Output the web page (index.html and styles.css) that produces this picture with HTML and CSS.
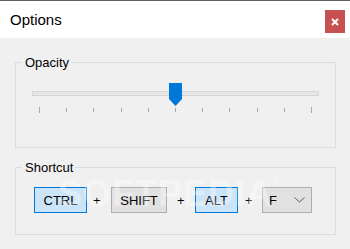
FILE: index.html
```html
<!DOCTYPE html>
<html>
<head>
<meta charset="utf-8">
<link rel="stylesheet" href="styles.css">
</head>
<body>
<div class="window">
  <header class="titlebar">
    <span class="title">Options</span>
    <button class="close" aria-label="Close">
      <svg width="8" height="8" viewBox="0 0 8 8"><path d="M1 1 L7 7 M7 1 L1 7" stroke="#fff" stroke-width="2" fill="none"/></svg>
    </button>
  </header>
  <main class="content">
    <fieldset class="group">
      <legend>Opacity</legend>
      <div class="slider">
        <div class="track-area">
          <div class="track"></div>
          <svg class="thumb" width="13" height="24" viewBox="0 0 13 24"><path d="M0 0 H13 V16 L6.5 23 L0 16 Z" fill="#0078d7"/></svg>
        </div>
        <div class="ticks">
          <span class="tick end"></span><span class="tick"></span><span class="tick"></span><span class="tick"></span><span class="tick"></span><span class="tick"></span><span class="tick"></span><span class="tick"></span><span class="tick"></span><span class="tick"></span><span class="tick end"></span>
        </div>
      </div>
    </fieldset>
    <fieldset class="group shortcut">
      <legend>Shortcut</legend>
      <div class="keys">
        <span class="key on k-ctrl">CTRL</span>
        <span class="plus p1">+</span>
        <span class="key k-shift">SHIFT</span>
        <span class="plus p2">+</span>
        <span class="key on k-alt">ALT</span>
        <span class="plus p3">+</span>
        <span class="key select">
          <span>F</span>
          <svg width="11" height="6" viewBox="0 0 11 6"><path d="M0.5 0.5 L5.5 5 L10.5 0.5" stroke="#606060" stroke-width="1" fill="none"/></svg>
        </span>
      </div>
    </fieldset>
  </main>
  <div class="watermark">SOFTPEDIA<span class="reg">®</span></div>
</div>
</body>
</html>
```
FILE: styles.css
```css
html, body {
  margin: 0;
  padding: 0;
}
body {
  background: #f0f0f0;
  font-family: "Liberation Sans", Arial, sans-serif;
  font-size: 13px;
  color: #000;
}
.window {
  position: relative;
  width: 350px;
  height: 249px;
  overflow: hidden;
  border-top: 1px solid #5f5f5f;
  box-sizing: border-box;
}
.titlebar {
  height: 37px;
  background: #fff;
  display: flex;
  justify-content: space-between;
  align-items: flex-start;
  padding-left: 10px;
}
.title {
  margin-top: 10px;
  font-size: 15px;
  line-height: 18px;
  color: #000;
}
.close {
  margin: 9px 5px 0 0;
  width: 20px;
  height: 23px;
  padding: 0;
  border: none;
  background: #c75050;
  display: flex;
  align-items: center;
  justify-content: center;
}
.content {
  padding: 17px 14px 0 15px;
}
.group {
  margin: 0;
  padding: 0;
  min-width: 0;
  border: 1px solid #dcdcdc;
}
.group legend {
  margin-left: 6px;
  padding: 0 2px 0 3px;
  font-size: 13px;
  line-height: 15px;
}
.slider {
  margin: 13px 16px 34px 16px;
}
.track-area {
  position: relative;
  height: 24px;
}
.track {
  position: relative;
  top: 8px;
  height: 5px;
  box-sizing: border-box;
  border: 1px solid #d6d6d6;
  background: #e6e6e6;
}
.thumb {
  position: absolute;
  top: 0;
  left: 137px;
}
.ticks {
  display: flex;
  justify-content: space-between;
  align-items: flex-start;
  height: 6px;
  padding: 0 7px;
}
.tick {
  width: 1px;
  height: 4px;
  margin-top: 1px;
  background: #a8a8a8;
}
.tick.end {
  height: 6px;
  margin-top: 0;
}
.shortcut {
  margin-top: 12px;
}
.keys {
  display: flex;
  align-items: center;
  margin: 12px 0 21px 18px;
  height: 26px;
}
.key {
  height: 26px;
  box-sizing: border-box;
  display: flex;
  align-items: center;
  justify-content: center;
  border: 1px solid #adadad;
  background: #e1e1e1;
  font-size: 13px;
}
.key.on {
  border-color: #0078d7;
  background: #cce4f7;
}
.k-ctrl { width: 53px; }
.k-shift { width: 56px; }
.k-alt { width: 43px; }
.select {
  width: 50px;
  justify-content: space-between;
  padding: 0 6px 0 6px;
}
.plus {
  box-sizing: border-box;
  font-size: 13px;
}
.p1 { width: 24px; padding-left: 6px; }
.p2 { width: 28px; padding-left: 10px; }
.p3 { width: 24px; padding-left: 7px; }
.watermark {
  position: absolute;
  left: 58px;
  top: 172px;
  font-size: 36px;
  font-weight: bold;
  color: rgba(255, 255, 255, 0.35);
  letter-spacing: 1px;
  pointer-events: none;
}
.watermark .reg {
  font-size: 12px;
  vertical-align: top;
}
```
